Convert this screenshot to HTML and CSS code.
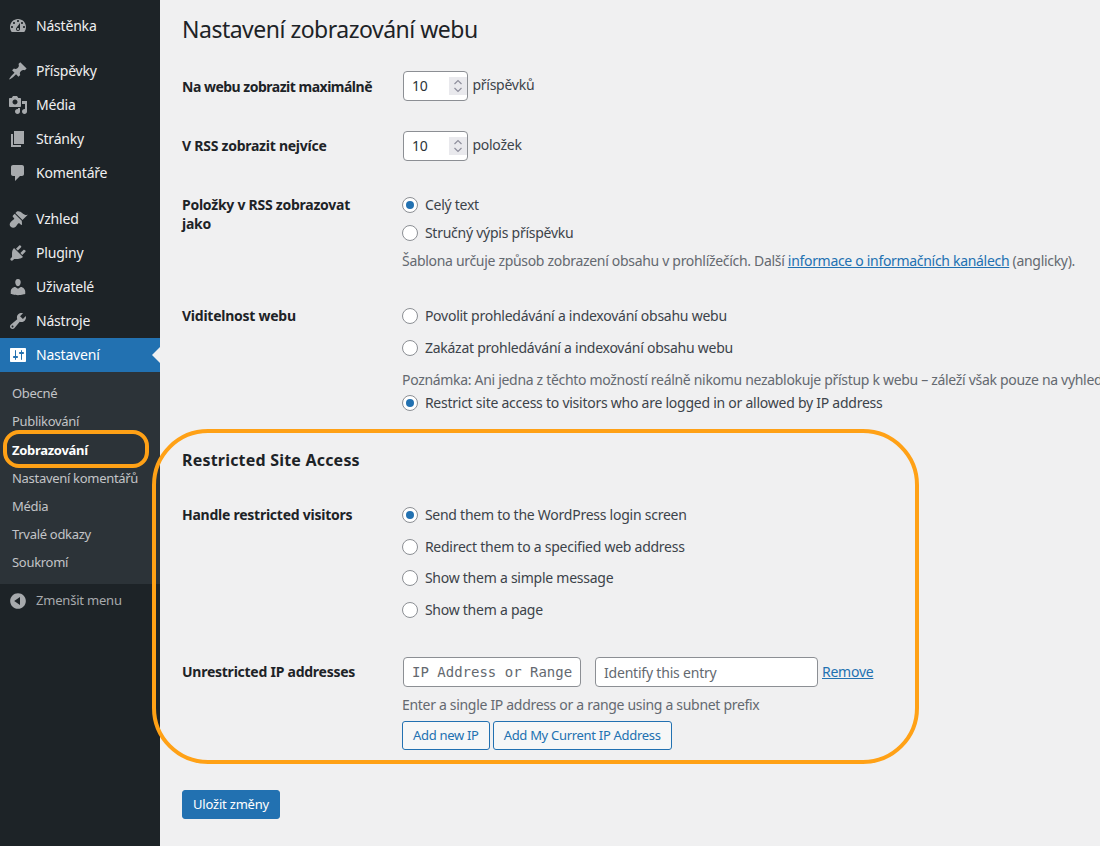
FILE: index.html
```html
<!DOCTYPE html>
<html lang="cs">
<head>
    <meta charset="UTF-8">
    <meta name="viewport" content="width=device-width, initial-scale=1.0">
    <title>Nastavení zobrazování webu</title>
    <link rel="stylesheet" href="styles.css">
</head>
<body>

<div class="page">
    <!-- Admin menu -->
    <nav class="sidebar">
        <ul class="menu">
            <li class="menu-item"><svg class="menu-icon" viewBox="0 0 20 20"><path fill-rule="evenodd" d="M3.76 16h12.48c1.1-1.37 1.76-3.11 1.76-5 0-4.42-3.58-8-8-8s-8 3.58-8 8c0 1.89.66 3.63 1.76 5zM10 4c.55 0 1 .45 1 1s-.45 1-1 1-1-.45-1-1 .45-1 1-1zM6 6c.55 0 1 .45 1 1s-.45 1-1 1-1-.45-1-1 .45-1 1-1zm8 0c.55 0 1 .45 1 1s-.45 1-1 1-1-.45-1-1 .45-1 1-1zm-5.37 5.55L12 7v6c0 1.1-.9 2-2 2s-2-.9-2-2c0-.57.24-1.08.63-1.45zM4 10c.55 0 1 .45 1 1s-.45 1-1 1-1-.45-1-1 .45-1 1-1zm12 0c.55 0 1 .45 1 1s-.45 1-1 1-1-.45-1-1 .45-1 1-1zm-5 3c0-.55-.45-1-1-1s-1 .45-1 1 .45 1 1 1 1-.45 1-1z"/></svg>Nástěnka</li>
            <li class="menu-gap"></li>
            <li class="menu-item"><svg class="menu-icon" viewBox="0 0 20 20"><path d="M10.44 3.02l1.82-1.82 6.36 6.35-1.83 1.82c-1.05-.68-2.48-.57-3.41.36l-.75.75c-.92.93-1.04 2.35-.35 3.41l-1.83 1.82-2.41-2.41-2.8 2.79c-.42.42-3.38 2.71-3.8 2.29s1.86-3.39 2.28-3.81l2.79-2.79L4.1 9.36l1.83-1.82c1.05.69 2.48.57 3.4-.36l.75-.75c.93-.92 1.05-2.35.36-3.41z"/></svg>Příspěvky</li>
            <li class="menu-item"><svg class="menu-icon" viewBox="0 0 20 20"><path fill-rule="evenodd" d="M13 11V4c0-.55-.45-1-1-1h-1.67L9 1H5L3.67 3H2c-.55 0-1 .45-1 1v7c0 .55.45 1 1 1h10c.55 0 1-.45 1-1zM7 4.5c1.38 0 2.5 1.12 2.5 2.5S8.38 9.5 7 9.5 4.5 8.38 4.5 7 5.62 4.5 7 4.5zM14 6h5v10.5c0 1.38-1.12 2.5-2.5 2.5S14 17.88 14 16.5s1.12-2.5 2.5-2.5c.17 0 .34.02.5.05V9h-3V6zm-4 8.05V13h2v3.5c0 1.38-1.12 2.5-2.5 2.5S7 17.88 7 16.5 8.12 14 9.5 14c.17 0 .34.02.5.05z"/></svg>Média</li>
            <li class="menu-item"><svg class="menu-icon" viewBox="0 0 20 20"><path d="M6 15V2h10v13H6zm-1 1h8v2H3V5h2v11z"/></svg>Stránky</li>
            <li class="menu-item"><svg class="menu-icon" viewBox="0 0 20 20"><path d="M5 2h9c1.1 0 2 .9 2 2v7c0 1.1-.9 2-2 2h-2l-5 5v-5H5c-1.1 0-2-.9-2-2V4c0-1.1.9-2 2-2z"/></svg>Komentáře</li>
            <li class="menu-gap wide-gap"></li>
            <li class="menu-item"><svg class="menu-icon" viewBox="0 0 20 20"><path d="M14.48 11.06L7.41 3.99l1.5-1.5c.5-.56 2.3-.47 3.51.32 1.21.8 1.43 1.28 2.91 2.1 1.18.64 2.45 1.26 4.45.85zm-.71.71L6.7 4.7 4.93 6.47c-.39.39-.39 1.02 0 1.41l1.06 1.06c.39.39.39 1.03 0 1.42-.6.6-1.43 1.11-2.21 1.69-.35.26-.7.53-1.01.84-1.43 1.43-1.4 3.52-.02 4.9 1.39 1.39 3.48 1.41 4.9-.02.31-.31.58-.66.84-1.01.58-.78 1.09-1.61 1.69-2.21.39-.39 1.03-.39 1.42 0l1.06 1.06c.39.39 1.02.39 1.41 0z"/></svg>Vzhled</li>
            <li class="menu-item"><svg class="menu-icon" viewBox="0 0 20 20"><path d="M13.11 4.36L9.87 7.6 8 5.73l3.24-3.24c.35-.34 1.05-.2 1.56.32.52.51.66 1.21.31 1.55zm-8 1.77l.91-1.12 9.01 9.01-1.19.84c-.71.71-2.63 1.16-3.82 1.16H6.14L4.9 17.26c-.59.59-1.54.59-2.12 0-.59-.58-.59-1.53 0-2.12l1.24-1.24v-3.88c0-1.13.4-3.19 1.09-3.89zm7.26 3.97l3.24-3.24c.34-.35 1.04-.21 1.55.31.52.51.66 1.21.31 1.55l-3.24 3.25z"/></svg>Pluginy</li>
            <li class="menu-item"><svg class="menu-icon" viewBox="0 0 20 20"><path d="M10 9.25c-2.27 0-2.73-3.44-2.73-3.44C7 4.02 7.82 2 9.97 2c2.16 0 2.98 2.02 2.71 3.81 0 0-.41 3.44-2.68 3.44zm0 2.57L12.72 10c2.39 0 4.52 2.33 4.52 4.53v2.49s-3.65 1.13-7.24 1.13c-3.65 0-7.24-1.13-7.24-1.13v-2.49c0-2.25 1.94-4.48 4.47-4.48z"/></svg>Uživatelé</li>
            <li class="menu-item"><svg class="menu-icon" viewBox="0 0 20 20"><path fill-rule="evenodd" d="M16.68 9.77c-1.34 1.34-3.3 1.67-4.95.99l-5.41 6.52c-.99.99-2.59.99-3.58 0s-.99-2.59 0-3.57l6.52-5.42c-.68-1.65-.35-3.61.99-4.95 1.28-1.28 3.12-1.62 4.72-1.06l-2.89 2.89 2.82 2.82 2.86-2.87c.53 1.58.18 3.39-1.08 4.67zM3.81 16.21c.4.39 1.04.39 1.43 0 .4-.4.4-1.04 0-1.43-.39-.4-1.03-.4-1.43 0-.39.39-.39 1.03 0 1.43z"/></svg>Nástroje</li>
            <li class="menu-item active"><svg class="menu-icon" viewBox="0 0 20 20"><path fill-rule="evenodd" d="M18 16V4c0-.55-.45-1-1-1H3c-.55 0-1 .45-1 1v12c0 .55.45 1 1 1h14c.55 0 1-.45 1-1zM8 11h1c.55 0 1 .45 1 1s-.45 1-1 1H8v1.5c0 .28-.22.5-.5.5s-.5-.22-.5-.5V13H6c-.55 0-1-.45-1-1s.45-1 1-1h1V5.5c0-.28.22-.5.5-.5s.5.22.5.5V11zm5-2h-1c-.55 0-1-.45-1-1s.45-1 1-1h1V5.5c0-.28.22-.5.5-.5s.5.22.5.5V7h1c.55 0 1 .45 1 1s-.45 1-1 1h-1v5.5c0 .28-.22.5-.5.5s-.5-.22-.5-.5V9z"/></svg>Nastavení</li>
        </ul>
        <ul class="submenu">
            <li>Obecné</li>
            <li>Publikování</li>
            <li class="current">Zobrazování</li>
            <li>Nastavení komentářů</li>
            <li>Média</li>
            <li>Trvalé odkazy</li>
            <li>Soukromí</li>
        </ul>
        <div class="menu-item collapse"><svg class="menu-icon" viewBox="0 0 20 20"><path fill-rule="evenodd" d="M10 2.16c4.33 0 7.84 3.51 7.84 7.84s-3.51 7.84-7.84 7.84S2.16 14.33 2.16 10 5.71 2.16 10 2.16zm2 11.72V6.12L6.18 9.97z"/></svg>Zmenšit menu</div>
    </nav>

    <!-- Settings form -->
    <main class="content">
        <h1>Nastavení zobrazování webu</h1>
        <form>
            <table class="form-table">
                <tr>
                    <th class="num-th squeeze">Na webu zobrazit maximálně</th>
                    <td><span class="number-wrap"><input class="small-number" type="number" value="10"><span class="spinner"><svg viewBox="0 0 18 18"><path d="M5.5 7 9 3.5 12.500 7M5.500 11 9 14.500 12.500 11"/></svg></span></span> příspěvků</td>
                </tr>
                <tr>
                    <th class="num-th">V RSS zobrazit nejvíce</th>
                    <td><span class="number-wrap"><input class="small-number" type="number" value="10"><span class="spinner"><svg viewBox="0 0 18 18"><path d="M5.5 7 9 3.5 12.500 7M5.500 11 9 14.500 12.500 11"/></svg></span></span> položek</td>
                </tr>
                <tr>
                    <th>Položky v RSS zobrazovat jako</th>
                    <td class="tight">
                        <label class="radio"><input type="radio" name="rss" checked> Celý text</label>
                        <label class="radio"><input type="radio" name="rss"> Stručný výpis příspěvku</label>
                        <p class="description short">Šablona určuje způsob zobrazení obsahu v prohlížečích. Další <a href="#">informace o informačních kanálech</a> (anglicky).</p>
                    </td>
                </tr>
                <tr>
                    <th>Viditelnost webu</th>
                    <td class="tight">
                        <label class="radio wide"><input type="radio" name="vis"> Povolit prohledávání a indexování obsahu webu</label>
                        <label class="radio wide"><input type="radio" name="vis"> Zakázat prohledávání a indexování obsahu webu</label>
                        <p class="description note">Poznámka: Ani jedna z těchto možností reálně nikomu nezablokuje přístup k webu – záleží však pouze na vyhledávačích, zda budou</p>
                        <label class="radio"><input type="radio" name="vis" checked> Restrict site access to visitors who are logged in or allowed by IP address</label>
                    </td>
                </tr>
            </table>

            <h2>Restricted Site Access</h2>
            <table class="form-table">
                <tr>
                    <th>Handle restricted visitors</th>
                    <td class="tight">
                        <label class="radio wide"><input type="radio" name="handle" checked> Send them to the WordPress login screen</label>
                        <label class="radio wide"><input type="radio" name="handle"> Redirect them to a specified web address</label>
                        <label class="radio wide"><input type="radio" name="handle"> Show them a simple message</label>
                        <label class="radio last"><input type="radio" name="handle"> Show them a page</label>
                    </td>
                </tr>
                <tr>
                    <th class="ip-th">Unrestricted IP addresses</th>
                    <td>
                        <div class="ip-row">
                            <input class="ip-input" type="text" placeholder="IP Address or Range">
                            <input class="label-input" type="text" placeholder="Identify this entry">
                            <a href="#">Remove</a>
                        </div>
                        <p class="description">Enter a single IP address or a range using a subnet prefix</p>
                        <div class="btn-row">
                            <button class="btn" type="button">Add new IP</button>
                            <button class="btn" type="button">Add My Current IP Address</button>
                        </div>
                    </td>
                </tr>
            </table>

            <button class="btn primary" type="button">Uložit změny</button>
        </form>
    </main>

    <!-- Orange highlights drawn on top of the screenshot -->
    <div class="ring ring-menu"></div>
    <div class="ring ring-section"></div>
</div>

</body>
</html>
```

FILE: styles.css
```css
html, body {
    margin: 0;
    height: 100%;
    overflow: hidden;
}

body {
    background: #f0f0f1;
    color: #3c434a;
    font-family: "Noto Sans", "Open Sans", sans-serif;
    font-size: 14px;
    line-height: 1.3;
}

a {
    color: #2271b1;
}

/* Page frame */
.page {
    position: relative;
    display: flex;
    min-height: 846px;
}

/* Sidebar */
.sidebar {
    flex: 0 0 160px;
    width: 160px;
    padding-top: 9px;
    background: #1d2327;
    box-sizing: border-box;
}

.menu, .submenu {
    list-style: none;
    margin: 0;
    padding: 0;
}

.menu-item {
    position: relative;
    display: flex;
    align-items: center;
    height: 34px;
    padding-left: 8px;
    color: #f0f0f1;
    letter-spacing: -0.2px;
}

.menu-gap {
    height: 11px;
}

.wide-gap {
    height: 12px;
}

.menu-icon {
    flex: none;
    width: 20px;
    height: 20px;
    margin-right: 8px;
    fill: #a7aaad;
}

.menu-item.active {
    background: #2271b1;
    color: #fff;
}

.menu-item.active .menu-icon {
    fill: #fff;
}

.menu-item.active::after {
    content: "";
    position: absolute;
    right: 0;
    top: 9px;
    border: 8px solid transparent;
    border-right-color: #f0f0f1;
    border-left-width: 0;
}

.submenu {
    padding: 7.3px 0 7.3px;
    background: #2c3338;
    color: #c3c4c7;
    font-size: 13px;
    letter-spacing: -0.3px;
}

.submenu li {
    height: 28.2px;
    padding-left: 12px;
    line-height: 28px;
}

.submenu .current {
    color: #fff;
    font-weight: 700;
}

.menu-item.collapse {
    color: #a7aaad;
    font-size: 13px;
}

/* Main area */
.content {
    flex: 1;
    min-width: 0;
    padding: 0 0 0 22px;
    overflow: hidden;
}

h1 {
    margin: 15px 0 0;
    height: 41px;
    color: #1d2327;
    font-size: 23px;
    font-weight: 400;
    line-height: 29px;
    letter-spacing: -0.5px;
}

h2 {
    margin: 0;
    padding: 11px 0 0;
    height: 38px;
    color: #1d2327;
    font-size: 16px;
    font-weight: 700;
    line-height: 24px;
    letter-spacing: 0.2px;
}

.form-table {
    border-collapse: collapse;
    width: 918px;
    table-layout: fixed;
}

.form-table th {
    width: 200px;
    padding: 20px 10px 19px 0;
    color: #1d2327;
    font-weight: 700;
    line-height: 1.35;
    text-align: left;
    vertical-align: top;
    letter-spacing: -0.25px;
}

.form-table th.num-th {
    padding-top: 21px;
}

.form-table th.ip-th {
    padding-top: 21px;
}

.form-table th.squeeze {
    padding-top: 22px;
    padding-bottom: 18px;
    letter-spacing: -0.5px;
}

.form-table td {
    padding: 15px 0 15px 10px;
    vertical-align: top;
    white-space: nowrap;
    letter-spacing: -0.25px;
}

.form-table td.tight {
    padding-top: 20px;
}

/* Inputs */
input[type="number"],
input[type="text"] {
    box-sizing: border-box;
    height: 30px;
    padding: 0 8px;
    border: 1px solid #8c8f94;
    border-radius: 4px;
    background: #fff;
    color: #2c3338;
    font-family: inherit;
    font-size: 14px;
    letter-spacing: -0.2px;
}

.number-wrap {
    position: relative;
    display: inline-block;
    margin: 0 1px;
    vertical-align: middle;
}

.small-number {
    display: block;
    width: 65px;
    padding-bottom: 2px !important;
    appearance: textfield;
}

.spinner {
    position: absolute;
    right: 1px;
    top: 6px;
    width: 18px;
    height: 18px;
    background: #e9e9ed;
}

.spinner svg {
    display: block;
    width: 18px;
    height: 18px;
    fill: none;
    stroke: #8f8f9d;
    stroke-width: 1.2;
}

.radio {
    display: block;
    height: 28px;
    line-height: 18px;
}

.radio.wide {
    height: 31.5px;
}

.radio.last {
    height: 26.5px;
}

.radio input {
    appearance: none;
    box-sizing: border-box;
    position: relative;
    width: 16px;
    height: 16px;
    margin: 0 3.5px 0 0;
    border: 1px solid #8c8f94;
    border-radius: 50%;
    background: #fff;
    vertical-align: -3px;
}

.radio input:checked::before {
    content: "";
    position: absolute;
    left: 3px;
    top: 3px;
    width: 8px;
    height: 8px;
    border-radius: 50%;
    background: #2271b1;
}

.description {
    margin: 0 0 7px;
    color: #646970;
    letter-spacing: -0.31px;
}

.description.short {
    margin-bottom: 2px;
}

.description.note {
    margin: 1px 0 5px;
}

.ip-row {
    display: flex;
    align-items: center;
    gap: 4px;
    margin: 0 0 9px 1px;
}

.ip-input {
    flex: none;
    width: 178px;
    font-family: "DejaVu Sans Mono", "Liberation Mono", monospace !important;
    letter-spacing: 0 !important;
}

.label-input {
    flex: none;
    width: 223px;
    margin-left: 10px;
}

input::placeholder {
    color: #646970;
    opacity: 1;
}

/* Buttons */
.btn {
    box-sizing: border-box;
    height: 29px;
    padding: 0 10px;
    border: 1px solid #2271b1;
    border-radius: 3px;
    background: #f6f7f7;
    color: #2271b1;
    font-family: inherit;
    font-size: 13px;
    letter-spacing: -0.3px;
}

.btn-row {
    display: flex;
    gap: 3px;
    margin-top: -1px;
}

.btn.primary {
    display: block;
    margin-top: 25px;
    background: #2271b1;
    color: #fff;
    letter-spacing: -0.2px;
}

/* Highlights */
.ring {
    position: absolute;
    box-sizing: border-box;
    border: 4px solid #ffa116;
    pointer-events: none;
}

.ring-menu {
    left: 3px;
    top: 430px;
    width: 146px;
    height: 38px;
    border-radius: 16px;
}

.ring-section {
    left: 152px;
    top: 429px;
    width: 767px;
    height: 335px;
    border-radius: 56px;
}
```
